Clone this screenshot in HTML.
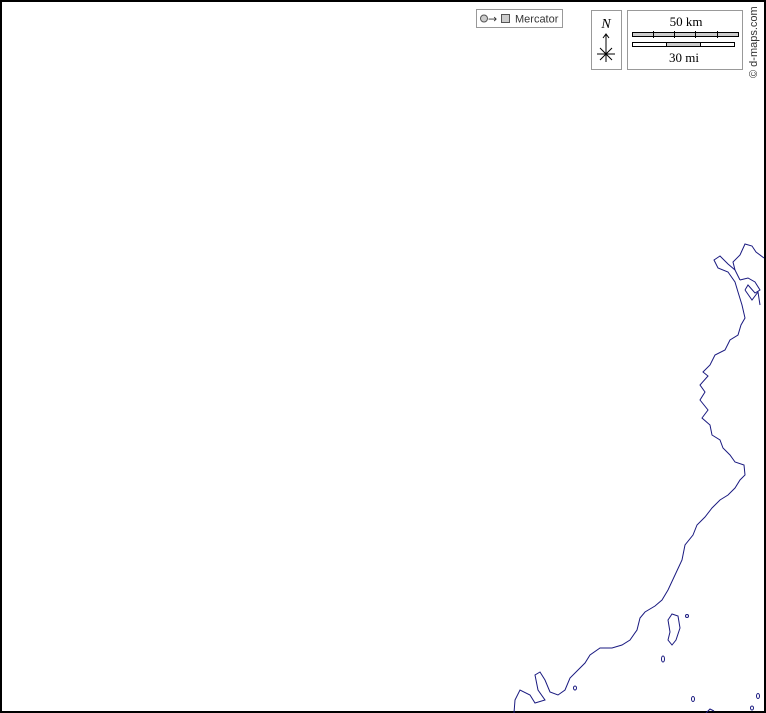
<!DOCTYPE html>
<html><head><meta charset="utf-8"><style>
html,body{margin:0;padding:0;background:#fff;}
body{width:766px;height:713px;position:relative;overflow:hidden;}
.frame{position:absolute;left:0;top:0;width:762px;height:709px;border:2px solid #000;}
</style></head><body>
<div class="frame"></div>
<svg width="766" height="713" style="position:absolute;left:0;top:0" xmlns="http://www.w3.org/2000/svg">
<g fill="none" stroke="#1a1a80" stroke-width="1">
<polyline points="514,713 515,700 520,690 530,695 535,703 545,700 538,690 535,675 540,672 545,680 550,692 558,695 565,690 570,678 578,670 585,663 590,655 600,648 612,648 622,645 630,640 637,630 640,618 645,612 655,606 662,600 668,590 675,575 682,560 685,545 693,535 697,525 705,517 712,508 720,500 728,495 735,488 740,480 745,475 744,465 735,462 730,455 723,448 720,440 712,435 710,425 702,418 708,410 700,400 705,392 700,385 708,376 703,372 710,365 715,355 725,350 730,340 738,335 741,325 745,318 742,305 738,292 735,282 728,272 718,268 714,260 720,256 728,264 735,270 740,280"/>
<polyline points="735,270 733,262 740,255 745,244 752,246 756,252 764,258"/>
<polyline points="740,280 748,278 755,282 760,290 755,293 748,285 745,290"/>
<polyline points="745,290 752,300 758,292 760,305"/>
<path d="M668,620 L672,614 678,616 680,628 676,640 672,645 668,640 670,632 Z"/>
<ellipse cx="687" cy="616" rx="1.5" ry="1.5"/>
<ellipse cx="663" cy="659" rx="1.5" ry="3"/>
<ellipse cx="575" cy="688" rx="1.5" ry="2"/>
<ellipse cx="693" cy="699" rx="1.5" ry="2.5"/>
<ellipse cx="758" cy="696" rx="1.5" ry="2.5"/>
<path d="M706,713 L710,709 714,711"/>
<ellipse cx="752" cy="708" rx="1.5" ry="2"/>
</g>
<rect x="476.5" y="9.5" width="86" height="18" fill="#fff" stroke="#999"/>
<circle cx="484" cy="18.5" r="3.5" fill="#ccc" stroke="#555"/>
<text x="488" y="22.5" font-family="DejaVu Sans,sans-serif" font-size="11" fill="#333">→</text>
<rect x="501.5" y="14.5" width="8" height="8" fill="#ccc" stroke="#555"/>
<text x="515" y="22.5" font-family="Liberation Sans,sans-serif" font-size="11" fill="#333">Mercator</text>
<rect x="591.5" y="10.5" width="30" height="59" fill="#fff" stroke="#999"/>
<text x="606" y="28" text-anchor="middle" font-family="Liberation Serif,serif" font-style="italic" font-size="14" fill="#000">N</text>
<g stroke="#000" stroke-width="1" fill="none">
<line x1="606" y1="35" x2="606" y2="62"/>
<polyline points="603,38 606,34 609,38"/>
<line x1="597" y1="54" x2="615" y2="54"/>
<line x1="600" y1="48" x2="612" y2="60"/>
<line x1="612" y1="48" x2="600" y2="60"/>
</g>
<rect x="627.5" y="10.5" width="115" height="59" fill="#fff" stroke="#999"/>
<text x="686" y="26" text-anchor="middle" font-family="Liberation Serif,serif" font-size="13">50 km</text>
<rect x="632.5" y="32.5" width="106" height="4" fill="#ccc" stroke="#000" stroke-width="1"/>
<g stroke="#000"><line x1="653.5" y1="31" x2="653.5" y2="38"/><line x1="674.5" y1="31" x2="674.5" y2="38"/><line x1="695.5" y1="31" x2="695.5" y2="38"/><line x1="717.5" y1="31" x2="717.5" y2="38"/></g>
<rect x="632.5" y="42.5" width="102" height="4" fill="#fff" stroke="#000"/>
<rect x="666.5" y="42.5" width="34" height="4" fill="#ccc" stroke="#000"/>
<text x="684" y="62" text-anchor="middle" font-family="Liberation Serif,serif" font-size="13">30 mi</text>
<text transform="translate(757,78) rotate(-90)" font-family="Liberation Sans,sans-serif" font-size="11" fill="#333">© d-maps.com</text>
</svg>
</body></html>
